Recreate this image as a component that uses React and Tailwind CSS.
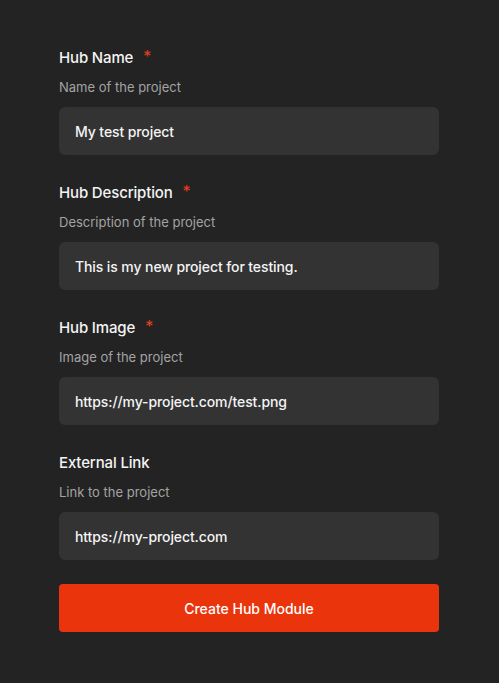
import React, { useState } from 'react';

const fields = [
  { name: 'name', label: 'Hub Name', hint: 'Name of the project', value: 'My test project', required: true },
  { name: 'description', label: 'Hub Description', hint: 'Description of the project', value: 'This is my new project for testing.', required: true },
  { name: 'image', label: 'Hub Image', hint: 'Image of the project', value: 'https://my-project.com/test.png', required: true },
  { name: 'link', label: 'External Link', hint: 'Link to the project', value: 'https://my-project.com', required: false },
];

const App = () => {
  const [formData, setFormData] = useState(
    Object.fromEntries(fields.map(f => [f.name, f.value]))
  );

  const handleChange = (e) => {
    const { name, value } = e.target;
    setFormData(prev => ({ ...prev, [name]: value }));
  };

  return (
    <div className="min-h-[683px] bg-[#232323] px-[59px] pt-12 pb-[51px] font-['Inter',sans-serif]">
      <form onSubmit={e => e.preventDefault()} className="flex flex-col w-[380px]">
        <div className="flex flex-col gap-7">
          {fields.map(f => (
            <div key={f.name} className="flex flex-col">
              <label htmlFor={f.name} className="flex items-center text-[15px] leading-5 font-medium tracking-[-0.15px] text-[#f4f4f4]">
                {f.label}
                {f.required && <span className="ml-2.5 text-[#e8401c] text-[16px] font-normal leading-5 -mt-1">*</span>}
              </label>
              <span className="mt-2.5 text-[13px] leading-[18px] text-[#a3a3a3]">{f.hint}</span>
              <input
                id={f.name}
                name={f.name}
                value={formData[f.name]}
                onChange={handleChange}
                className="mt-[11px] h-12 w-full rounded-md bg-[#333333] px-4 text-[14px] font-medium tracking-[-0.1px] text-[#f4f4f4] outline-none"
              />
            </div>
          ))}
        </div>
        <button
          type="submit"
          className="mt-6 h-12 w-full rounded bg-[#ea340c] text-[14px] font-medium text-white"
        >
          Create Hub Module
        </button>
      </form>
    </div>
  );
};

export default App;
